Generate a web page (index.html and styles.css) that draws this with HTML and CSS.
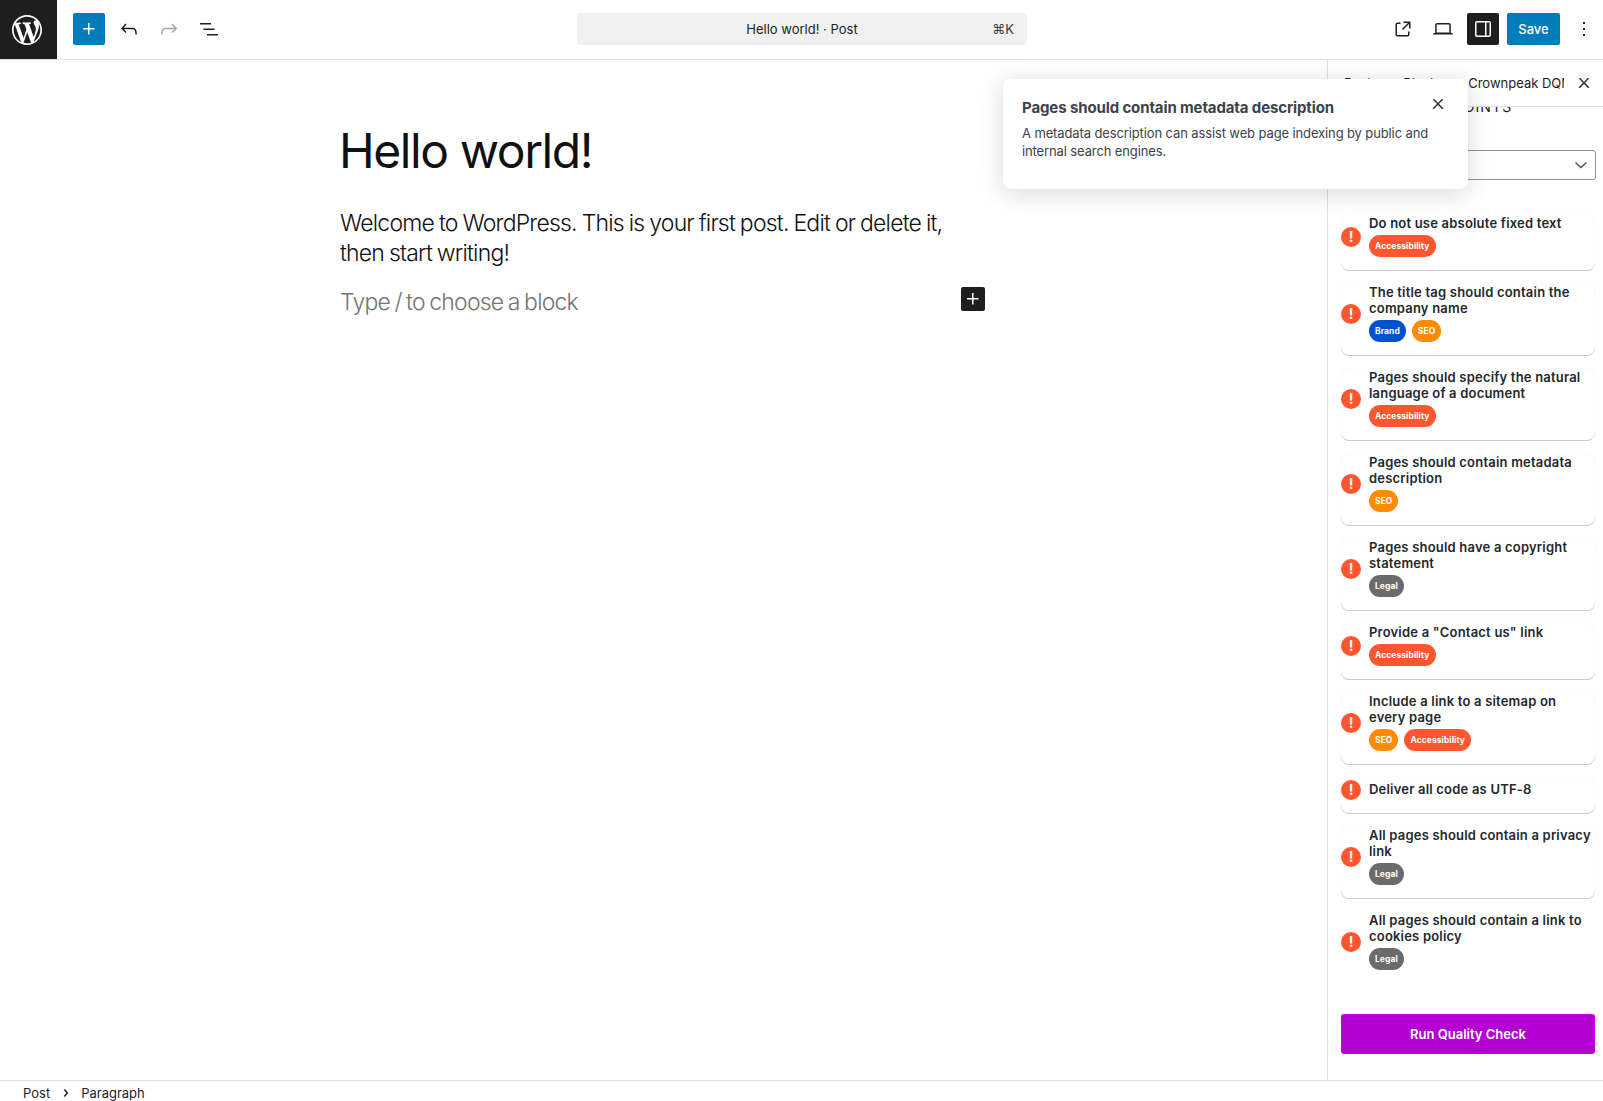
FILE: index.html
```html
<!DOCTYPE html>
<html lang="en">
<head>
    <meta charset="UTF-8">
    <meta name="viewport" content="width=device-width, initial-scale=1.0">
    <title>Edit Post</title>
    <link rel="stylesheet" href="styles.css">
</head>
<body>
    <div class="app">
        <header class="topbar">
            <div class="wp-logo">
                <svg width="30" height="30" viewBox="0 0 20 20" fill="#fff"><path d="M20 10c0-5.51-4.49-10-10-10C4.48 0 0 4.49 0 10c0 5.52 4.48 10 10 10 5.51 0 10-4.48 10-10zM7.78 15.37L4.37 6.22c.55-.02 1.17-.08 1.17-.08.5-.06.44-1.13-.06-1.11 0 0-1.45.11-2.37.11-.18 0-.37 0-.58-.01C4.12 2.69 6.87 1.11 10 1.11c2.33 0 4.45.87 6.05 2.34-.68-.11-1.65.39-1.65 1.58 0 .74.45 1.36.9 2.1.35.61.55 1.36.55 2.46 0 1.49-1.4 5-1.4 5l-3.03-8.37c.54-.02.82-.17.82-.17.5-.05.44-1.25-.06-1.22 0 0-1.44.12-2.38.12-.87 0-2.33-.12-2.33-.12-.5-.03-.56 1.2-.06 1.22l.92.08 1.26 3.41zM17.41 10c.24-.64.74-1.87.43-4.25.7 1.29 1.05 2.71 1.05 4.25 0 3.29-1.73 6.24-4.4 7.78.97-2.59 1.94-5.2 2.92-7.78zM6.1 18.09C3.12 16.65 1.11 13.53 1.11 10c0-1.3.23-2.48.72-3.59C3.25 10.3 4.67 14.2 6.1 18.09zm4.03-6.63l2.58 6.98c-.86.29-1.76.45-2.71.45-.79 0-1.57-.11-2.29-.33.81-2.38 1.62-4.74 2.42-7.1z"/></svg>
            </div>
            <div class="tools">
                <button class="icon-btn primary"><svg width="24" height="24" viewBox="0 0 24 24" fill="#fff"><path d="M11 12.5V17.5H12.5V12.5H17.5V11H12.5V6H11V11H6V12.5H11Z"/></svg></button>
                <button class="icon-btn"><svg width="24" height="24" viewBox="0 0 24 24" fill="#1e1e1e"><path d="M18.3 11.7c-.6-.6-1.4-.9-2.3-.9H6.7l2.9-3.3-1.1-1-4.5 5L8.5 16l1-1-2.7-2.7H16c.5 0 .9.2 1.3.5 1 1 1 3.4 1 4.5v.3h1.5v-.2c0-1.5 0-4.3-1.5-5.7z"/></svg></button>
                <button class="icon-btn"><svg width="24" height="24" viewBox="0 0 24 24" fill="#a6a6a6"><path d="M15.6 6.5l-1.1 1 2.9 3.3H8c-.9 0-1.7.3-2.3.9-1.4 1.5-1.4 4.2-1.4 5.6v.2h1.5v-.3c0-1.1 0-3.5 1-4.5.3-.3.7-.5 1.3-.5h9.2L14.5 15l1.1 1.1 4.6-4.6-4.6-5z"/></svg></button>
                <button class="icon-btn"><svg width="24" height="24" viewBox="0 0 24 24" fill="#1e1e1e"><path d="M3 6h11v1.5H3V6zm3.5 5.5h11V13h-11v-1.5zM21 17H10v1.5h11V17z"/></svg></button>
            </div>
            <div class="command-bar">
                <span class="command-title">Hello world! · Post</span>
                <span class="command-key">⌘K</span>
            </div>
            <div class="actions">
                <button class="icon-btn"><svg width="24" height="24" viewBox="0 0 24 24" fill="#1e1e1e"><path d="M19.5 4.5h-7V6h4.44l-5.97 5.97 1.06 1.06L18 7.06v4.44h1.5v-7Zm-13 1a2 2 0 0 0-2 2v10a2 2 0 0 0 2 2h10a2 2 0 0 0 2-2v-3H17v3a.5.5 0 0 1-.5.5h-10a.5.5 0 0 1-.5-.5v-10a.5.5 0 0 1 .5-.5h3V5.5h-3Z"/></svg></button>
                <button class="icon-btn"><svg width="24" height="24" viewBox="0 0 24 24" fill="#1e1e1e"><path d="M20.5 16h-.7V8c0-1.1-.9-2-2-2H6.2c-1.1 0-2 .9-2 2v8h-.7c-.8 0-1.5.7-1.5 1.5h20c0-.8-.7-1.5-1.5-1.5zM5.7 8c0-.3.2-.5.5-.5h11.6c.3 0 .5.2.5.5v7.6H5.7V8z"/></svg></button>
                <button class="icon-btn dark"><svg width="24" height="24" viewBox="0 0 24 24" fill="#fff"><path d="M18 4H6c-1.1 0-2 .9-2 2v12c0 1.1.9 2 2 2h12c1.1 0 2-.9 2-2V6c0-1.1-.9-2-2-2zm-4 14.5H6c-.3 0-.5-.2-.5-.5V6c0-.3.2-.5.5-.5h8v13zm4.5-.5c0 .3-.2.5-.5.5h-2.5v-13H18c.3 0 .5.2.5.5v12z"/></svg></button>
                <button class="save-btn">Save</button>
                <button class="icon-btn"><svg width="24" height="24" viewBox="0 0 24 24" fill="#1e1e1e"><path d="M13 19h-2v-2h2v2zm0-6h-2v-2h2v2zm0-6h-2V5h2v2z"/></svg></button>
            </div>
        </header>

        <div class="main">
            <main class="editor">
                <div class="canvas">
                    <h1 class="post-title">Hello world!</h1>
                    <p class="post-text">Welcome to WordPress. This is your first post. Edit or delete it, then start writing!</p>
                    <div class="new-block">
                        <span class="placeholder">Type / to choose a block</span>
                        <button class="block-add"><svg width="24" height="24" viewBox="0 0 24 24" fill="#fff"><path d="M11 12.5V17.5H12.5V12.5H17.5V11H12.5V6H11V11H6V12.5H11Z"/></svg></button>
                    </div>
                </div>
            </main>

            <aside class="sidebar">
                <div class="tabs">
                    <div class="tab-list">
                        <span class="tab">Post</span>
                        <span class="tab">Block</span>
                        <span class="tab">Crownpeak DQM</span>
                    </div>
                    <button class="tab-close"><svg width="16" height="16" viewBox="0 0 24 24" fill="#1e1e1e" stroke="#1e1e1e" stroke-width=".8"><path d="M13 11.8l6.1-6.3-1-1-6.1 6.2-6.1-6.2-1 1 6.1 6.3-6.5 6.7 1 1 6.5-6.6 6.5 6.6 1-1z"/></svg></button>
                </div>
                <div class="panel">
                    <h2 class="panel-heading">FAILED CHECKPOINTS</h2>
                    <div class="select-box">
                        <svg width="18" height="18" viewBox="0 0 18 18" fill="none" stroke="#50575e" stroke-width="1.5"><path d="M3.5 6.5L9 11.5L14.5 6.5"/></svg>
                    </div>
                    <div class="check-list">
                        <div class="check">
                            <span class="alert">!</span>
                            <div class="check-body">
                                <div class="check-title">Do not use absolute fixed text</div>
                                <div class="badges"><span class="badge red">Accessibility</span></div>
                            </div>
                        </div>
                        <div class="check">
                            <span class="alert">!</span>
                            <div class="check-body">
                                <div class="check-title">The title tag should contain the company name</div>
                                <div class="badges"><span class="badge blue">Brand</span><span class="badge orange">SEO</span></div>
                            </div>
                        </div>
                        <div class="check">
                            <span class="alert">!</span>
                            <div class="check-body">
                                <div class="check-title">Pages should specify the natural language of a document</div>
                                <div class="badges"><span class="badge red">Accessibility</span></div>
                            </div>
                        </div>
                        <div class="check">
                            <span class="alert">!</span>
                            <div class="check-body">
                                <div class="check-title">Pages should contain metadata description</div>
                                <div class="badges"><span class="badge orange">SEO</span></div>
                            </div>
                        </div>
                        <div class="check">
                            <span class="alert">!</span>
                            <div class="check-body">
                                <div class="check-title">Pages should have a copyright statement</div>
                                <div class="badges"><span class="badge grey">Legal</span></div>
                            </div>
                        </div>
                        <div class="check">
                            <span class="alert">!</span>
                            <div class="check-body">
                                <div class="check-title">Provide a "Contact us" link</div>
                                <div class="badges"><span class="badge red">Accessibility</span></div>
                            </div>
                        </div>
                        <div class="check">
                            <span class="alert">!</span>
                            <div class="check-body">
                                <div class="check-title">Include a link to a sitemap on every page</div>
                                <div class="badges"><span class="badge orange">SEO</span><span class="badge red">Accessibility</span></div>
                            </div>
                        </div>
                        <div class="check">
                            <span class="alert">!</span>
                            <div class="check-body">
                                <div class="check-title">Deliver all code as UTF-8</div>
                            </div>
                        </div>
                        <div class="check">
                            <span class="alert">!</span>
                            <div class="check-body">
                                <div class="check-title">All pages should contain a privacy link</div>
                                <div class="badges"><span class="badge grey">Legal</span></div>
                            </div>
                        </div>
                        <div class="check last">
                            <span class="alert">!</span>
                            <div class="check-body">
                                <div class="check-title">All pages should contain a link to cookies policy</div>
                                <div class="badges"><span class="badge grey">Legal</span></div>
                            </div>
                        </div>
                    </div>
                    <button class="run-btn">Run Quality Check</button>
                </div>
            </aside>

            <div class="popover">
                <button class="popover-close"><svg width="16" height="16" viewBox="0 0 24 24" fill="#1e1e1e" stroke="#1e1e1e" stroke-width=".8"><path d="M13 11.8l6.1-6.3-1-1-6.1 6.2-6.1-6.2-1 1 6.1 6.3-6.5 6.7 1 1 6.5-6.6 6.5 6.6 1-1z"/></svg></button>
                <h3 class="popover-title">Pages should contain metadata description</h3>
                <p class="popover-text">A metadata description can assist web page indexing by public and internal search engines.</p>
            </div>
        </div>

        <footer class="breadcrumbs">
            <span>Post</span>
            <svg width="24" height="24" viewBox="0 0 24 24" fill="#1e1e1e"><path d="M10.8622 8.04053L14.2805 12.0286L10.8622 16.0167L9.72327 15.0405L12.3049 12.0286L9.72327 9.01672L10.8622 8.04053Z"/></svg>
            <span>Paragraph</span>
        </footer>
    </div>
</body>
</html>
```
FILE: styles.css
```css
* { box-sizing: border-box; }
html, body { margin: 0; height: 100%; }
body { font-family: Inter, "Noto Sans", sans-serif; color: #1e1e1e; background: #fff; overflow: hidden; }
button { font-family: inherit; border: none; background: none; padding: 0; margin: 0; cursor: pointer; }
h1, h2, h3, p { margin: 0; }

.app { display: flex; flex-direction: column; height: 1101px; }

/* top toolbar */
.topbar { display: flex; height: 60px; flex: none; border-bottom: 1px solid #e0e0e0; }
.wp-logo { width: 57px; height: 59px; background: #1e1e1e; display: flex; align-items: center; padding-left: 12px; flex: none; }
.tools { display: flex; gap: 8px; margin: 13px 0 0 16px; width: 504px; flex: none; }
.icon-btn { width: 32px; height: 32px; border-radius: 2px; display: flex; align-items: center; justify-content: center; flex: none; }
.icon-btn.primary { background: #007cba; }
.icon-btn.dark { background: #1e1e1e; }
.command-bar { width: 450px; height: 32px; margin-top: 13px; background: #f0f0f0; border-radius: 4px; display: flex; align-items: center; justify-content: center; position: relative; font-size: 13px; color: #1e1e1e; flex: none; }
.command-key { position: absolute; right: 13px; color: #3c3c3c; }
.actions { display: flex; gap: 8px; margin: 13px 0 0 auto; padding-right: 3px; }
.save-btn { width: 53px; height: 32px; background: #007cba; color: #fff; font-size: 13px; font-weight: 500; border-radius: 2px; }

/* editor + sidebar */
.main { display: flex; flex: 1; min-height: 0; position: relative; }
.editor { flex: 1; min-width: 0; }
.canvas { width: 645px; margin-left: 340px; padding-top: 62px; }
.post-title { font-size: 48px; line-height: 58px; font-weight: 400; letter-spacing: -1.4px; color: #111; margin-left: -1px; }
.post-text { font-size: 23px; line-height: 30px; font-weight: 300; letter-spacing: -.8px; word-spacing: -.8px; color: #111; margin-top: 28px; }
.new-block { display: flex; justify-content: space-between; margin-top: 19px; height: 30px; }
.placeholder { font-size: 23px; line-height: 30px; font-weight: 300; letter-spacing: -.8px; word-spacing: -1.2px; color: #757575; }
.block-add { width: 24px; height: 24px; background: #1e1e1e; border-radius: 2px; display: flex; }

.sidebar { width: 276px; flex: none; border-left: 1px solid #e0e0e0; display: flex; flex-direction: column; }
.tabs { height: 47px; flex: none; display: flex; align-items: center; border-bottom: 1px solid #e0e0e0; }
.tab-list { display: flex; width: 236px; overflow: hidden; flex: none; }
.tab { font-size: 13px; padding: 0 16px; white-space: nowrap; flex: none; }
.tab:nth-child(3) { padding: 0 0 0 15px; }
.tab-close { width: 24px; height: 24px; margin-left: 8px; display: flex; align-items: center; justify-content: center; }

.panel { flex: 1; min-height: 0; overflow: hidden; padding: 0 8px 0 13px; }
.panel-heading { font-size: 14px; line-height: 16px; font-weight: 400; letter-spacing: 1.1px; margin-top: -8px; white-space: nowrap; }
.select-box { height: 30px; margin-top: 35px; margin-right: -1px; border: 1px solid #8c8f94; border-radius: 3px; display: flex; align-items: center; justify-content: flex-end; padding-right: 5px; }

.check-list { display: flex; flex-direction: column; gap: 14px; margin-top: 35px; }
.check { display: flex; align-items: center; gap: 8px; padding-bottom: 13px; border-radius: 8px; box-shadow: 0 1px 0 #ccc, 0 0 1px rgba(0,0,0,.1); }
.check.last { box-shadow: none; }
.alert { width: 20px; height: 20px; margin-top: 2px; border-radius: 50%; background: #ff5630; color: #fff; font-size: 14px; font-weight: 700; line-height: 20px; text-align: center; flex: none; }
.check-body { flex: 1; min-width: 0; min-height: 22px; display: flex; flex-direction: column; justify-content: center; }
.check-title { font-size: 13px; line-height: 16px; font-weight: 600; letter-spacing: .2px; color: #23282d; }
.badges { display: flex; gap: 6px; margin-top: 4px; }
.badge { height: 22px; line-height: 22px; padding: 0 6px; border-radius: 11px; color: #fff; font-size: 8.5px; font-weight: 700; letter-spacing: .06px; }
.badge.red { background: #ff5630; }
.badge.blue { background: #0052cc; }
.badge.orange { background: #ff8b00; }
.badge.grey { background: #6b6b6b; }

.run-btn { display: block; width: 100%; height: 40px; margin-top: 31px; background: #b400d1; color: #fff; font-size: 13px; font-weight: 600; border-radius: 3px; }

/* popover over the sidebar */
.popover { position: absolute; top: 19px; left: 1003px; width: 465px; height: 110px; background: #fff; border-radius: 8px; padding: 19px; box-shadow: 0 4px 24px rgba(0,0,0,.16); color: #3c434a; }
.popover-title { font-size: 15px; line-height: 20px; font-weight: 700; letter-spacing: -.12px; }
.popover-text { font-size: 13px; line-height: 18px; letter-spacing: -.12px; margin-top: 6px; width: 425px; }
.popover-close { position: absolute; top: 15px; right: 20px; width: 20px; height: 20px; display: flex; align-items: center; justify-content: center; }

.breadcrumbs { height: 21px; flex: none; border-top: 1px solid #e0e0e0; display: flex; align-items: center; padding: 4px 0 0 23px; font-size: 13px; color: #1e1e1e; overflow: hidden; }
.breadcrumbs svg { margin: 0 3px 0 4px; flex: none; }
```
